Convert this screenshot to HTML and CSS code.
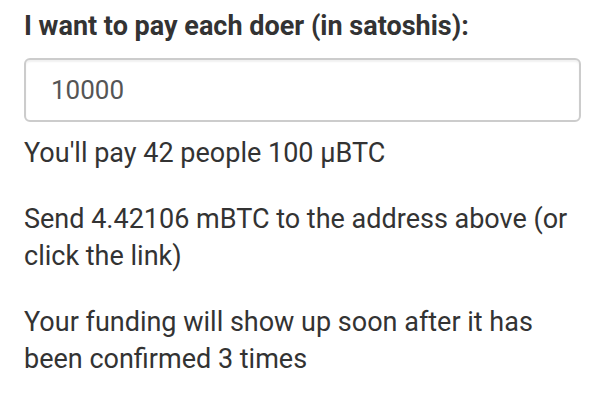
FILE: index.html
```html
<!DOCTYPE html>
<html>
<head>
<meta charset="utf-8">
<link rel="stylesheet" href="styles.css">
</head>
<body>
<div class="page">
  <label class="label" for="amount">I want to pay each doer (in satoshis):</label>
  <input class="field" id="amount" type="text" value="10000">
  <p class="note">You'll pay 42 people 100 µBTC</p>
  <p class="note">Send 4.42106 mBTC to the address above (or click the link)</p>
  <p class="note">Your funding will show up soon after it has been confirmed 3 times</p>
</div>
</body>
</html>
```
FILE: styles.css
```css
html, body {
  margin: 0;
  padding: 0;
  background: #ffffff;
}
.page {
  padding: 8px 20px 0 24px;
  font-family: Roboto, "Liberation Sans", sans-serif;
  font-size: 27px;
  line-height: 37px;
  color: #333333;
}
.label {
  display: block;
  font-weight: bold;
  margin: 0 0 13px 0;
}
.field {
  display: block;
  box-sizing: border-box;
  width: 557px;
  height: 64px;
  margin: 0 0 13px 0;
  padding: 0 25px;
  border: 2px solid #cccccc;
  border-radius: 6px;
  box-shadow: inset 0 2px 2px rgba(0,0,0,0.06);
  font-family: Roboto, "Liberation Sans", sans-serif;
  font-size: 26px;
  color: #555555;
  background: #ffffff;
  outline: none;
}
.note {
  margin: 0 0 29px 0;
}
```
